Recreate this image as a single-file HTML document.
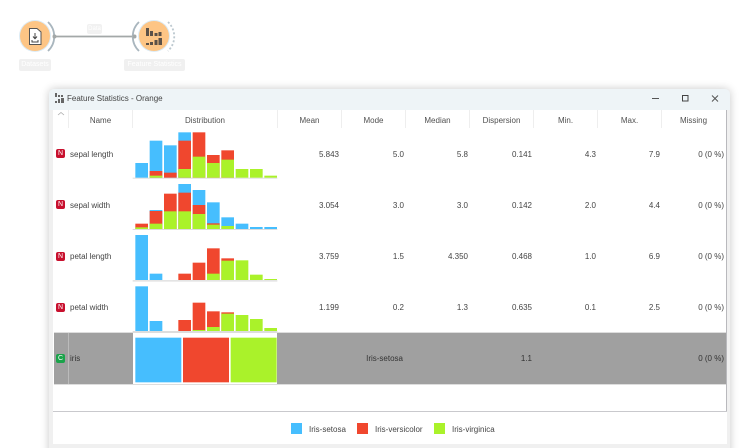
<!DOCTYPE html>
<html style="overflow:hidden;width:743px;height:448px"><head><meta charset="utf-8"><style>
html,body{margin:0;padding:0;background:#fff}
body{width:743px;height:448px;position:relative;overflow:hidden;font-family:"Liberation Sans",sans-serif;color:#444;font-size:8px}
#w{position:absolute;left:0;top:0;width:743px;height:448px;overflow:hidden;filter:blur(.25px)}
.a{position:absolute;white-space:nowrap}
.r{position:absolute;white-space:nowrap;text-align:right;width:80px;line-height:10px;margin-top:1px}
.h{position:absolute;top:115px;line-height:10px;text-align:center;color:#505050;margin-top:1px}
.s{position:absolute;top:110px;width:1px;height:18px;background:#eee}
.b{position:absolute;left:56px;width:9px;height:9px;border-radius:2px;color:#fff;font-size:7px;line-height:9px;text-align:center}
.n{position:absolute;left:70px;line-height:10px;margin-top:1px}
</style></head><body><div id="w">
<!-- canvas -->
<svg class="a" style="left:0;top:0" width="200" height="80" viewBox="0 0 200 80">
<line x1="54" y1="36.500" x2="135" y2="36.500" stroke="#a3a8a8" stroke-width="1.800"/>
<circle cx="35" cy="36" r="16" fill="#dcebf5"/>
<circle cx="35" cy="36" r="15" fill="#fdc585"/>
<path d="M48 22a20 20 0 0 1 0 29" fill="none" stroke="#a9b6be" stroke-width="1.800"/>
<circle cx="54.500" cy="36.500" r="2" fill="#a3a8a8"/>
<path d="M29.500 28.500h7.500l4 3.500v12.500h-11.500z" fill="#fff" stroke="#555" stroke-width="1"/>
<path d="M35 33v5.500M33 36.500l2 2.200 2-2.200M32 40v2h6v-2" fill="none" stroke="#444" stroke-width="1"/>
<circle cx="154" cy="36" r="16" fill="#dcebf5"/>
<circle cx="154" cy="36" r="15" fill="#fdc585"/>
<path d="M139 22a20 20 0 0 0 0 29" fill="none" stroke="#a9b6be" stroke-width="1.800"/>
<circle cx="134.500" cy="36.500" r="2" fill="#a3a8a8"/>
<path d="M168 22a20 20 0 0 1 0 29" fill="none" stroke="#bcc8cf" stroke-width="1.800" stroke-dasharray="2 2"/>
<g fill="#5b5148">
<rect x="146" y="28" width="3" height="8"/><rect x="150" y="31" width="3" height="5"/><rect x="154.500" y="33" width="3" height="3"/><rect x="158.500" y="32" width="3" height="4"/>
<rect x="146" y="43" width="3" height="2"/><rect x="150" y="42" width="3" height="3"/><rect x="154.500" y="40" width="3" height="5"/><rect x="158.500" y="38" width="3.500" height="7"/>
</g>
</svg>
<div class="a" style="left:87px;top:24px;width:15px;height:10px;background:#f1f1f1;border-radius:2px;color:#fff;font-size:6px;line-height:10px;text-align:center">Data</div>
<div class="a" style="left:19px;top:59px;width:32px;height:12px;background:#f0f0f0;border-radius:2px;color:#fff;font-size:7px;line-height:12px;text-align:center">Datasets</div>
<div class="a" style="left:124px;top:59px;width:61px;height:12px;background:#f0f0f0;border-radius:2px;color:#fff;font-size:7px;line-height:12px;text-align:center">Feature Statistics</div>

<!-- window -->
<div class="a" style="left:49px;top:89px;width:681px;height:380px;background:#f0f0f0;border-radius:5px 5px 0 0;box-shadow:0 0 9px rgba(0,0,0,.22)"></div>
<div class="a" style="left:49px;top:89px;width:681px;height:21px;background:#eef4f7;border-radius:5px 5px 0 0"></div>
<div class="a" style="left:53px;top:110px;width:674px;height:334px;background:#fff"></div>
<div class="a" style="left:726px;top:110px;width:1px;height:302px;background:#b9b9bd"></div>
<div class="a" style="left:53px;top:411px;width:674px;height:1px;background:#c9c9cd"></div>

<svg class="a" style="left:55px;top:93px" width="10" height="10" viewBox="0 0 10 10"><g fill="#666"><rect x="0" y="0" width="2" height="4"/><rect x="3" y="2" width="2" height="2"/><rect x="6" y="2" width="2" height="2"/><rect x="0" y="8" width="2" height="2"/><rect x="3" y="6" width="2" height="4"/><rect x="6" y="5" width="3" height="5"/></g></svg>
<div class="a" style="left:67px;top:93px;line-height:11px;font-size:8px;color:#444">Feature Statistics - Orange</div>
<svg class="a" style="left:650px;top:93px" width="72" height="11" viewBox="0 0 72 11">
<line x1="2" y1="5.500" x2="9" y2="5.500" stroke="#555"/>
<rect x="32.500" y="2.500" width="5.500" height="5.500" fill="none" stroke="#444"/>
<path d="M62 2.500l6 6M68 2.500l-6 6" stroke="#555" fill="none"/>
</svg>

<!-- header -->
<svg class="a" style="left:57px;top:111px" width="8" height="6"><path d="M1 4l3-2.500 3 2.500" fill="none" stroke="#aaa" stroke-width=".8"/></svg>
<div class="s" style="left:68px"></div><div class="s" style="left:132px"></div><div class="s" style="left:277px"></div><div class="s" style="left:341px"></div><div class="s" style="left:405px"></div><div class="s" style="left:469px"></div><div class="s" style="left:533px"></div><div class="s" style="left:597px"></div><div class="s" style="left:661px"></div>
<div class="h" style="left:69px;width:63px">Name</div>
<div class="h" style="left:133px;width:144px">Distribution</div>
<div class="h" style="left:278px;width:63px">Mean</div>
<div class="h" style="left:342px;width:63px">Mode</div>
<div class="h" style="left:406px;width:63px">Median</div>
<div class="h" style="left:470px;width:63px">Dispersion</div>
<div class="h" style="left:534px;width:63px">Min.</div>
<div class="h" style="left:598px;width:63px">Max.</div>
<div class="h" style="left:662px;width:63px">Missing</div>

<!-- iris selected row -->
<div class="a" style="left:54px;top:333px;width:672px;height:51px;background:#a0a0a0"></div>
<div class="a" style="left:68px;top:333px;width:1px;height:51px;background:#bbb"></div>
<div class="a" style="left:133px;top:333px;width:144px;height:51px;background:#fff"></div>
<div class="a" style="left:54px;top:332px;width:672px;height:1px;background:#ddd"></div>
<div class="a" style="left:54px;top:384px;width:672px;height:1px;background:#ddd"></div>

<!-- histograms -->
<svg class="a" style="left:0;top:0" width="743" height="448" viewBox="0 0 743 448">
<defs><style>.B{fill:#46befe}.R{fill:#f0472e}.G{fill:#aaf22a}</style></defs>
<g transform="translate(130,125) scale(.33333)">
<rect x="8" y="158" width="434" height="3" fill="#ddd"/>
<rect class="B" x="16" y="114" width="38" height="44"/>
<rect class="B" x="59" y="47" width="38" height="111"/><rect class="R" x="59" y="138" width="38" height="20"/><rect class="G" x="59" y="152" width="38" height="6"/>
<rect class="B" x="102" y="61" width="38" height="97"/><rect class="R" x="102" y="143" width="38" height="15"/>
<rect class="B" x="145" y="22" width="38" height="136"/><rect class="R" x="145" y="47" width="38" height="111"/><rect class="G" x="145" y="132" width="38" height="26"/>
<rect class="R" x="188" y="22" width="38" height="136"/><rect class="G" x="188" y="95" width="38" height="63"/>
<rect class="R" x="231" y="90" width="38" height="68"/><rect class="G" x="231" y="114" width="38" height="44"/>
<rect class="R" x="274" y="76" width="38" height="82"/><rect class="G" x="274" y="104" width="38" height="54"/>
<rect class="G" x="317" y="132" width="38" height="26"/>
<rect class="G" x="360" y="132" width="38" height="26"/>
<rect class="G" x="403" y="152" width="38" height="6"/>
<rect x="8" y="312" width="434" height="3" fill="#ddd"/>
<rect class="R" x="16" y="296" width="38" height="16"/><rect class="G" x="16" y="307" width="38" height="5"/>
<rect class="B" x="59" y="255" width="38" height="57"/><rect class="R" x="59" y="258" width="38" height="54"/><rect class="G" x="59" y="296" width="38" height="16"/>
<rect class="R" x="102" y="206" width="38" height="106"/><rect class="G" x="102" y="259" width="38" height="53"/>
<rect class="B" x="145" y="177" width="38" height="135"/><rect class="R" x="145" y="203" width="38" height="109"/><rect class="G" x="145" y="259" width="38" height="53"/>
<rect class="B" x="188" y="195" width="38" height="117"/><rect class="R" x="188" y="240" width="38" height="72"/><rect class="G" x="188" y="267" width="38" height="45"/>
<rect class="B" x="231" y="232" width="38" height="80"/><rect class="R" x="231" y="295" width="38" height="17"/><rect class="G" x="231" y="299" width="38" height="13"/>
<rect class="B" x="274" y="277" width="38" height="35"/><rect class="G" x="274" y="303" width="38" height="9"/>
<rect class="B" x="317" y="296" width="38" height="16"/>
<rect class="B" x="360" y="306" width="38" height="6"/>
<rect class="B" x="403" y="306" width="38" height="6"/>
</g>
<g transform="translate(130,230) scale(.33333)">
<rect x="8" y="150" width="434" height="5" fill="#e4e4e4"/>
<rect class="B" x="16" y="15" width="38" height="135"/>
<rect class="B" x="59" y="131" width="38" height="19"/>
<rect class="R" x="145" y="131" width="38" height="19"/>
<rect class="R" x="188" y="98" width="38" height="52"/>
<rect class="R" x="231" y="55" width="38" height="95"/><rect class="G" x="231" y="131" width="38" height="19"/>
<rect class="R" x="274" y="85" width="38" height="65"/><rect class="G" x="274" y="92" width="38" height="58"/>
<rect class="G" x="317" y="91" width="38" height="59"/>
<rect class="G" x="360" y="134" width="38" height="16"/>
<rect class="G" x="403" y="147" width="38" height="3"/>
<rect x="8" y="303" width="434" height="3" fill="#ddd"/>
<rect class="B" x="16" y="169" width="38" height="134"/>
<rect class="B" x="59" y="273" width="38" height="30"/>
<rect class="R" x="145" y="270" width="38" height="33"/>
<rect class="R" x="188" y="218" width="38" height="85"/><rect class="G" x="188" y="300" width="38" height="3"/>
<rect class="R" x="231" y="244" width="38" height="59"/><rect class="G" x="231" y="291" width="38" height="12"/>
<rect class="R" x="274" y="247" width="38" height="56"/><rect class="G" x="274" y="251" width="38" height="52"/>
<rect class="G" x="317" y="255" width="38" height="48"/>
<rect class="G" x="360" y="267" width="38" height="36"/>
<rect class="G" x="403" y="294" width="38" height="9"/>
</g>
<g transform="translate(40,325) scale(.33333)">
<rect class="B" x="286" y="38" width="138" height="134"/>
<rect class="R" x="429" y="38" width="138" height="134"/>
<rect class="G" x="572" y="38" width="138" height="134"/>
</g>
</svg>

<!-- rows -->
<div class="b" style="top:149px;background:#c8102e">N</div><div class="n" style="top:149px">sepal length</div>
<div class="b" style="top:200px;background:#c8102e">N</div><div class="n" style="top:200px">sepal width</div>
<div class="b" style="top:252px;background:#c8102e">N</div><div class="n" style="top:251px">petal length</div>
<div class="b" style="top:303px;background:#c8102e">N</div><div class="n" style="top:302px">petal width</div>
<div class="b" style="top:354px;background:#1aa34a">C</div><div class="n" style="top:353px;color:#333">iris</div>

<div class="r" style="left:259px;top:149px">5.843</div><div class="r" style="left:324px;top:149px">5.0</div><div class="r" style="left:388px;top:149px">5.8</div><div class="r" style="left:452px;top:149px">0.141</div><div class="r" style="left:516px;top:149px">4.3</div><div class="r" style="left:580px;top:149px">7.9</div><div class="r" style="left:644px;top:149px">0 (0 %)</div>
<div class="r" style="left:259px;top:200px">3.054</div><div class="r" style="left:324px;top:200px">3.0</div><div class="r" style="left:388px;top:200px">3.0</div><div class="r" style="left:452px;top:200px">0.142</div><div class="r" style="left:516px;top:200px">2.0</div><div class="r" style="left:580px;top:200px">4.4</div><div class="r" style="left:644px;top:200px">0 (0 %)</div>
<div class="r" style="left:259px;top:251px">3.759</div><div class="r" style="left:324px;top:251px">1.5</div><div class="r" style="left:388px;top:251px">4.350</div><div class="r" style="left:452px;top:251px">0.468</div><div class="r" style="left:516px;top:251px">1.0</div><div class="r" style="left:580px;top:251px">6.9</div><div class="r" style="left:644px;top:251px">0 (0 %)</div>
<div class="r" style="left:259px;top:302px">1.199</div><div class="r" style="left:324px;top:302px">0.2</div><div class="r" style="left:388px;top:302px">1.3</div><div class="r" style="left:452px;top:302px">0.635</div><div class="r" style="left:516px;top:302px">0.1</div><div class="r" style="left:580px;top:302px">2.5</div><div class="r" style="left:644px;top:302px">0 (0 %)</div>
<div class="r" style="left:323px;top:353px;color:#333">Iris-setosa</div><div class="r" style="left:452px;top:353px;color:#333">1.1</div><div class="r" style="left:644px;top:353px;color:#333">0 (0 %)</div>

<!-- legend -->
<div class="a" style="left:291px;top:423px;width:11px;height:11px;background:#46befe"></div>
<div class="a" style="left:309px;top:425px;line-height:10px">Iris-setosa</div>
<div class="a" style="left:357px;top:423px;width:11px;height:11px;background:#f0472e"></div>
<div class="a" style="left:375px;top:425px;line-height:10px">Iris-versicolor</div>
<div class="a" style="left:434px;top:423px;width:11px;height:11px;background:#aaf22a"></div>
<div class="a" style="left:452px;top:425px;line-height:10px">Iris-virginica</div>
</div></body></html>
